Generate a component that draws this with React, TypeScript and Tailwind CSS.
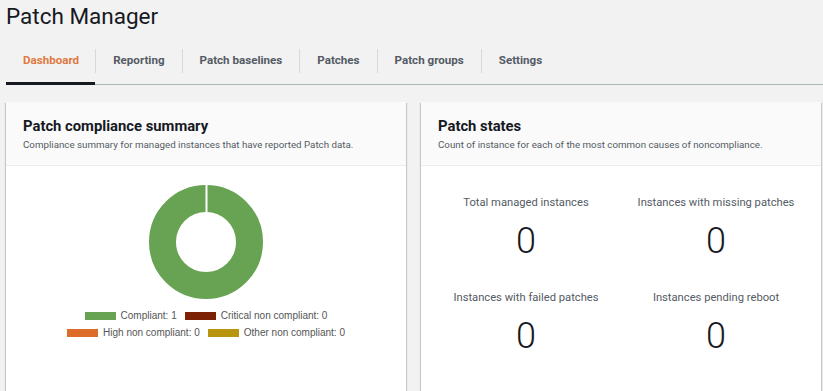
import React from 'react';

const tabs = ['Dashboard', 'Reporting', 'Patch baselines', 'Patches', 'Patch groups', 'Settings'];

const legendRows = [
    [
        { label: 'Compliant: 1', color: 'bg-[#67a353]' },
        { label: 'Critical non compliant: 0', color: 'bg-[#7d2105]' },
    ],
    [
        { label: 'High non compliant: 0', color: 'bg-[#dd6b2a]' },
        { label: 'Other non compliant: 0', color: 'bg-[#b8950f]' },
    ],
];

const states = [
    'Total managed instances',
    'Instances with missing patches',
    'Instances with failed patches',
    'Instances pending reboot',
];

const Card = ({ title, subtitle, children }: { title: string; subtitle: string; children: React.ReactNode }) => (
    <div className="w-[400px] shrink-0 bg-white shadow-[0_1px_1px_0_rgba(0,28,36,0.3),1px_1px_1px_0_rgba(0,28,36,0.15),-1px_1px_1px_0_rgba(0,28,36,0.15)]">
        <div className="h-[64px] bg-[#fafafa] border-b border-[#eaeded] px-[17px] pt-[14px]">
            <h2 className="text-[14.8px] leading-[21px] font-bold text-[#16191f]">{title}</h2>
            <p className="text-[9.75px] leading-[15px] text-[#545b64]">{subtitle}</p>
        </div>
        {children}
    </div>
);

export default function App() {
    return (
        <div className="w-[823px] h-[391px] overflow-hidden bg-[#f2f2f2] font-['Roboto',sans-serif]">
            <h1 className="pl-[6px] pt-[1px] text-[22.5px] leading-[30px] font-normal text-[#16191f]">Patch Manager</h1>

            {/* Tabs */}
            <div className="mt-[7px] ml-[6px] flex h-[47px] items-center border-b border-[#aab7b8]">
                {tabs.map((tab, i) => (
                    <React.Fragment key={tab}>
                        {i > 0 && <div className="h-[24px] w-px bg-[#d5dbdb]" />}
                        <div className={`relative flex h-full items-center ${i === 0 ? 'pl-[17px] pr-[16px]' : 'px-[17px]'}`}>
                            <span className={`text-[11.6px] font-bold ${i === 0 ? 'text-[#e07941]' : 'text-[#545b64]'}`}>{tab}</span>
                            {i === 0 && <div className="absolute left-0 right-0 bottom-[-1px] h-[3px] bg-[#16191f]" />}
                        </div>
                    </React.Fragment>
                ))}
            </div>

            {/* Cards */}
            <div className="mt-[17px] flex gap-[15px] pl-[6px]">
                <Card title="Patch compliance summary" subtitle="Compliance summary for managed instances that have reported Patch data.">
                    <div className="flex h-[240px] flex-col items-center pt-[19px]">
                        <svg width="114" height="114" viewBox="0 0 114 114">
                            <circle cx="57" cy="57" r="43.5" fill="none" stroke="#67a353" strokeWidth="27" />
                            <rect x="56.5" y="0" width="2" height="28" fill="#ffffff" />
                        </svg>
                        <div className="mt-[11px] flex flex-col items-center gap-[5px] font-['Liberation_Sans',sans-serif] text-[10px] leading-[12px] text-[#555]">
                            {legendRows.map((row, r) => (
                                <div key={r} className="flex items-center gap-[8px]">
                                    {row.map((item) => (
                                        <div key={item.label} className="flex items-center gap-[5px]">
                                            <span className={`h-[8px] w-[31px] ${item.color}`} />
                                            <span>{item.label}</span>
                                        </div>
                                    ))}
                                </div>
                            ))}
                        </div>
                    </div>
                </Card>

                <Card title="Patch states" subtitle="Count of instance for each of the most common causes of noncompliance.">
                    <div className="grid h-[240px] grid-cols-2 px-[10px] pt-[29px] gap-y-[27px] content-start">
                        {states.map((s) => (
                            <div key={s} className="flex flex-col items-center">
                                <span className="text-[11.2px] leading-[16px] text-[#545b64]">{s}</span>
                                <span className="mt-[8px] text-[36px] leading-[44px] font-light text-[#16191f]">0</span>
                            </div>
                        ))}
                    </div>
                </Card>
            </div>
        </div>
    );
}
